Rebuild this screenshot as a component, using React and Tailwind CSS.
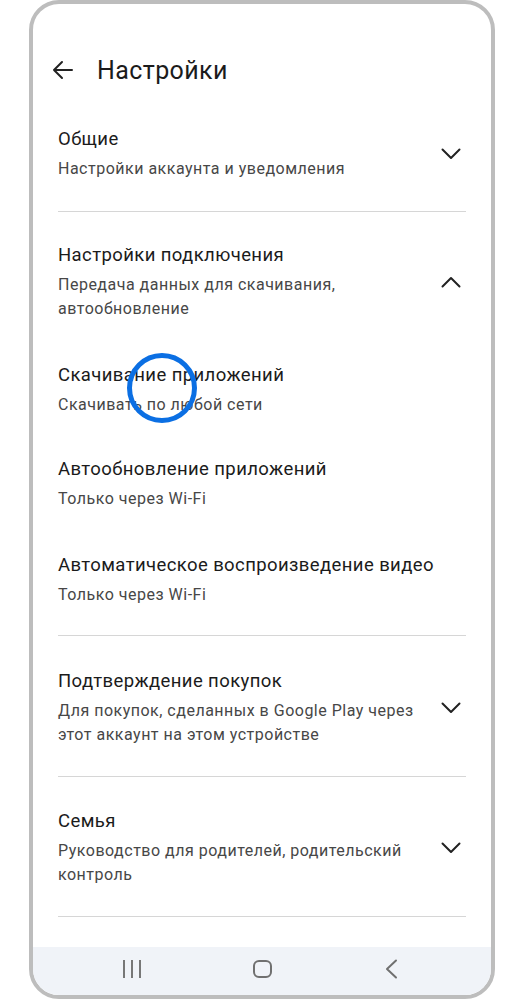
import React from "react";

const font = { fontFamily: "Roboto, 'Noto Sans', sans-serif" };

function Chevron({ up }) {
  return (
    <svg width="20" height="12" viewBox="0 0 20 12" className="mr-[5px] shrink-0">
      <path
        d={up ? "M1.5 10.5L10 2L18.5 10.5" : "M1.5 1.5L10 10L18.5 1.5"}
        fill="none"
        stroke="#222"
        strokeWidth="2"
        strokeLinecap="round"
        strokeLinejoin="round"
      />
    </svg>
  );
}

function Item({ title, lines }) {
  return (
    <div className="min-w-0 flex-1">
      <div className="text-[18.5px] leading-[24px] tracking-[0.4px] text-[#1b1b1b]">{title}</div>
      <div className="mt-1.5 text-[16px] leading-[24px] tracking-[0.5px] text-[#474747]">
        {lines.map((l) => (
          <div key={l}>{l}</div>
        ))}
      </div>
    </div>
  );
}

function Section({ title, lines, up, pt, pb, children }) {
  return (
    <div className={`border-b border-[#d6d6d6] ${pt} ${pb}`}>
      <div className="flex items-center gap-4">
        <Item title={title} lines={lines} />
        <Chevron up={up} />
      </div>
      {children}
    </div>
  );
}

export default function App() {
  return (
    <div className="relative h-[1000px] w-[525px] bg-white" style={font}>
      <div className="ml-[29px] flex h-[999px] w-[466px] flex-col overflow-hidden rounded-[30px] border-4 border-[#bdbdbd] bg-white">
        <div className="mt-[36px] flex h-[60px] items-center px-[20px]">
          <svg width="22" height="20" viewBox="0 0 22 20" className="ml-[-1px]">
            <path d="M20 10H2M10 2L2 10L10 18" fill="none" stroke="#222" strokeWidth="2" strokeLinecap="round" strokeLinejoin="round" />
          </svg>
          <span className="ml-[23px] text-[25px] leading-none tracking-[0.4px] text-[#1b1b1b]">Настройки</span>
        </div>

        <div className="px-[25px]">
          <Section title="Общие" lines={["Настройки аккаунта и уведомления"]} pt="pt-[27px]" pb="pb-[30px]" />
          <Section
            title="Настройки подключения"
            lines={["Передача данных для скачивания,", "автообновление"]}
            up
            pt="pt-[31px]"
            pb="pb-[28px]"
          >
            <div className="mt-[42px]">
              <Item title="Скачивание приложений" lines={["Скачивать по любой сети"]} />
            </div>
            <div className="mt-[40px]">
              <Item title="Автообновление приложений" lines={["Только через Wi-Fi"]} />
            </div>
            <div className="mt-[42px]">
              <Item title="Автоматическое воспроизведение видео" lines={["Только через Wi-Fi"]} />
            </div>
          </Section>
          <Section
            title="Подтверждение покупок"
            lines={["Для покупок, сделанных в Google Play через", "этот аккаунт на этом устройстве"]}
            pt="pt-[33px]"
            pb="pb-[29px]"
          />
          <Section
            title="Семья"
            lines={["Руководство для родителей, родительский", "контроль"]}
            pt="pt-[32px]"
            pb="pb-[29px]"
          />
        </div>

        <div className="flex-1" />

        <div className="flex h-[48px] items-center justify-center gap-[111px] bg-[#f0f3f8] pb-[4px]">
          <div className="flex h-[18px] w-[19px] justify-center gap-[6px]">
            <div className="w-[2px] bg-[#777]" />
            <div className="w-[2px] bg-[#777]" />
            <div className="w-[2px] bg-[#777]" />
          </div>
          <div className="h-[18px] w-[19px] rounded-[6px] border-2 border-[#707070]" />
          <svg width="19" height="20" viewBox="0 0 19 20">
            <path d="M13 1.5L4 10L13 18.5" fill="none" stroke="#707070" strokeWidth="2" strokeLinecap="round" strokeLinejoin="round" />
          </svg>
        </div>
      </div>

      <div className="absolute left-[127px] top-[353px] h-[70px] w-[70px] rounded-full border-[5px] border-[#0b6fe3]" />
    </div>
  );
}
